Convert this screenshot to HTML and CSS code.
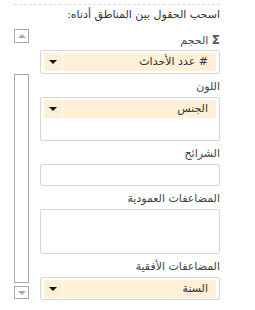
FILE: index.html
```html
<!DOCTYPE html>
<html lang="ar" dir="rtl">
<head>
    <meta charset="UTF-8">
    <meta name="viewport" content="width=device-width, initial-scale=1.0">
    <title>Field List</title>
    <link rel="stylesheet" href="styles.css">
</head>
<body>
    <!-- Field areas pane -->
    <div class="pane">
        <div class="pane-title">اسحب الحقول بين المناطق أدناه:</div>

        <div class="pane-body">
            <div class="areas">
                <div class="area-label"><span class="sigma">Σ</span> الحجم</div>
                <div class="well well-size">
                    <div class="chip">
                        <span class="chip-name">#&nbsp;عدد الأحداث</span>
                        <span class="chip-drop"><i></i></span>
                    </div>
                </div>

                <div class="area-label">اللون</div>
                <div class="well well-color">
                    <div class="chip">
                        <span class="chip-name">الجنس</span>
                        <span class="chip-drop"><i></i></span>
                    </div>
                </div>

                <div class="area-label">الشرائح</div>
                <div class="well well-slices"></div>

                <div class="area-label">المضاعفات العمودية</div>
                <div class="well well-vertical"></div>

                <div class="area-label">المضاعفات الأفقية</div>
                <div class="well well-horizontal">
                    <div class="chip">
                        <span class="chip-name">السنة</span>
                        <span class="chip-drop"><i></i></span>
                    </div>
                </div>
            </div>

            <!-- Scrollbar -->
            <div class="scroller">
                <div class="scroll-btn scroll-up"><i></i></div>
                <div class="scroll-thumb"></div>
                <div class="scroll-btn scroll-down"><i></i></div>
            </div>
        </div>
    </div>
</body>
</html>
```

FILE: styles.css
```css
/* Global Styles */
body {
    margin: 0;
    font-family: 'DejaVu Sans', sans-serif;
    font-size: 11px;
    color: #333;
    background: #fff;
}

/* Pane */
.pane {
    width: 206px;
    margin: 4px 35px 0 14px;
    border-top: 1px dashed #ddd;
}

.pane-title {
    line-height: 16px;
    padding-top: 2px;
}

.pane-body {
    display: flex;
    gap: 11px;
    padding-top: 6px;
}

/* Areas */
.areas {
    width: 180px;
}

.area-label {
    height: 16px;
    line-height: 16px;
    padding: 5px 0 2px;
    color: #444;
}

.areas .area-label:first-child {
    padding-top: 3px;
}

.sigma {
    font-size: 12px;
    font-weight: bold;
    color: #555;
}

.well {
    box-sizing: border-box;
    border: 1px solid #d6d6d6;
    border-radius: 2px;
    padding: 2px 3px;
}

.well-size { height: 24px; }
.well-color { height: 44px; }
.well-slices { height: 22px; }
.well-vertical { height: 45px; }
.well-horizontal { height: 23px; }

.chip {
    display: flex;
    height: 18px;
    background: #fdf0d6;
    line-height: 18px;
}

.chip-name {
    flex: 1;
    padding-right: 8px;
    color: #333;
}

.chip-drop {
    width: 18px;
    border-right: 1px solid #fff;
    display: flex;
    align-items: center;
    justify-content: center;
}

.chip-drop i {
    border-left: 4px solid transparent;
    border-right: 4px solid transparent;
    border-top: 4px solid #111;
}

/* Scrollbar */
.scroller {
    width: 15px;
    display: flex;
    flex-direction: column;
}

.scroll-btn {
    box-sizing: border-box;
    border: 1px solid #aaa;
    height: 14px;
    display: flex;
    align-items: center;
    justify-content: center;
}

.scroll-btn i {
    border-left: 4px solid transparent;
    border-right: 4px solid transparent;
}

.scroll-up i {
    border-bottom: 4px solid #aaa;
}

.scroll-down {
    height: 13px;
    margin-top: 3px;
}

.scroll-down i {
    border-top: 4px solid #aaa;
}

.scroll-thumb {
    box-sizing: border-box;
    border: 1px solid #aaa;
    height: 209px;
    margin-top: 31px;
}
```
